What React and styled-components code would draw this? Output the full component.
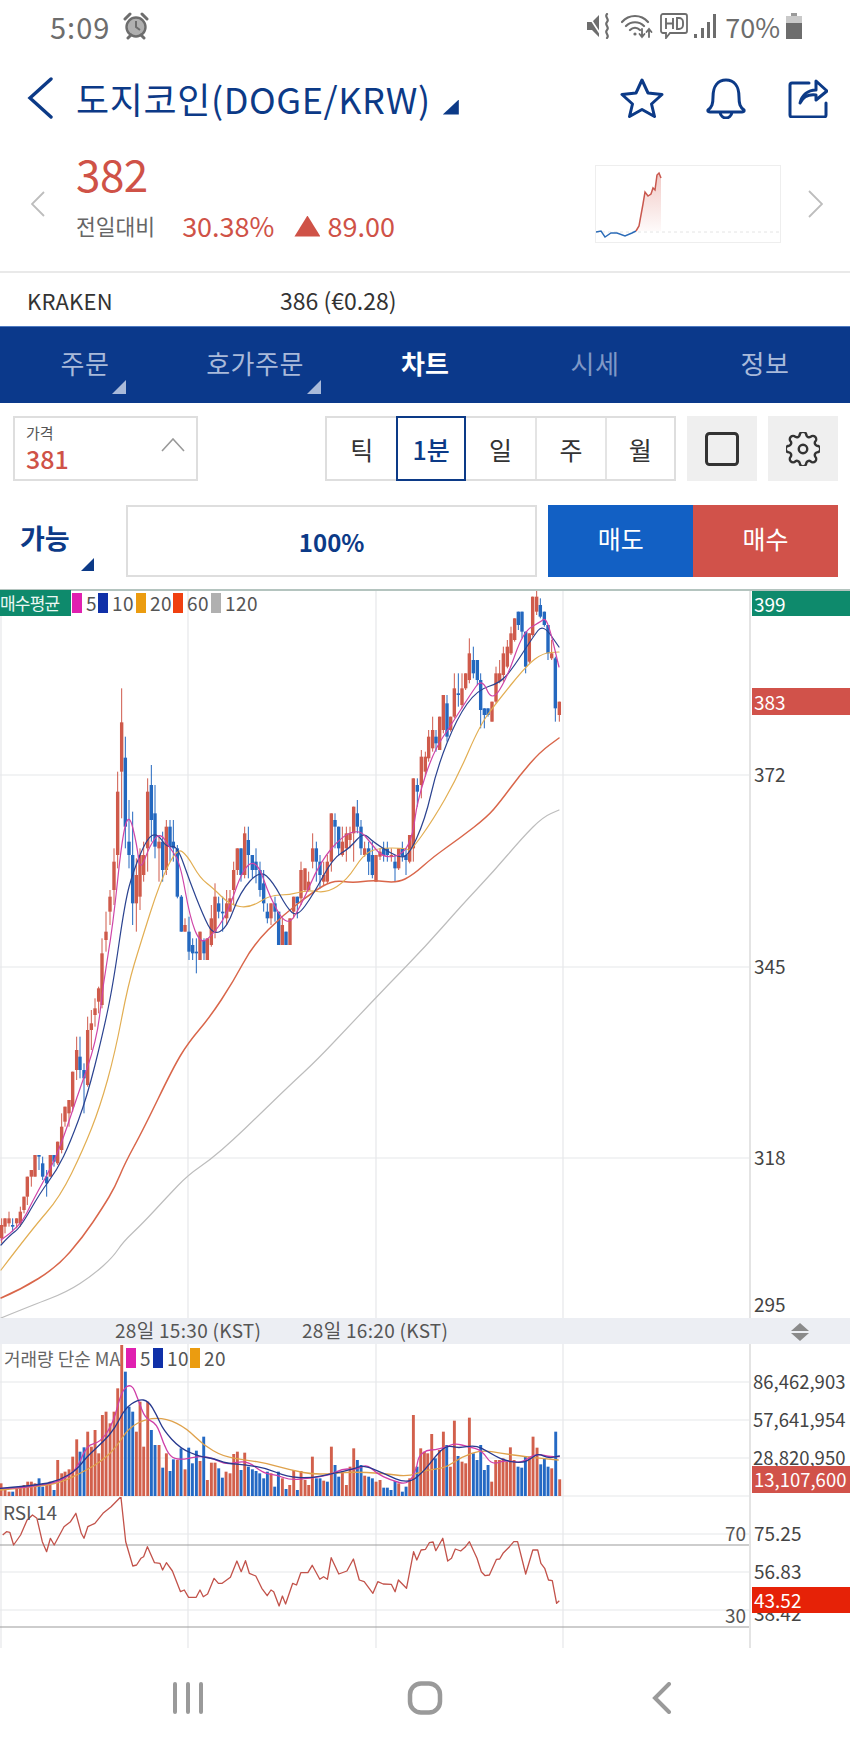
import React from 'react';
import styled, { createGlobalStyle } from 'styled-components';

const FONT = '"Noto Sans CJK KR", "Open Sans", sans-serif';
const NAVY = '#0c3a87';
const RED = '#cf5247';
const GRID = '#e6e7ea';

const Global = createGlobalStyle`
  html, body { margin: 0; padding: 0; background: #fff; }
  body { font-family: ${FONT}; }
  #root { width: 850px; }
`;

/* ---------- chart data, read off the reference ---------- */
const MA120 = [[1,1318],[33,1305],[67,1292],[93,1275],[113,1257],[123,1242],[143,1223],[167,1197],[188,1175],[210,1160],[233,1140],[257,1117],[290,1085],[317,1060],[350,1025],[388,985],[425,947],[462,905],[493,872],[523,837],[543,817],[559,810]];
const MA60 = [[1,1298],[20,1290],[57,1267],[83,1237],[103,1207],[115,1187],[125,1163],[143,1130],[173,1068],[188,1043],[210,1017],[233,982],[253,945],[283,915],[313,892],[333,880],[353,883],[373,880],[397,883],[413,875],[433,857],[460,838],[487,817],[500,802],[520,775],[540,752],[559,738]];
const MA20 = [[1,1270],[33,1228],[60,1197],[83,1150],[100,1107],[115,1053],[128,985],[140,945],[160,882],[177,848],[187,855],[200,878],[213,888],[230,905],[250,908],[270,895],[290,895],[307,890],[327,893],[347,880],[363,855],[377,848],[407,848],[410,852],[433,820],[457,778],[480,725],[497,702],[527,665],[543,653],[559,652]];
const MA10 = [[1,1245],[10,1235],[20,1228],[40,1193],[57,1170],[70,1143],[87,1097],[103,1033],[113,985],[125,902],[133,872],[147,838],[157,833],[167,848],[177,845],[190,882],[203,915],[213,935],[227,928],[240,892],[260,870],[273,882],[287,908],[297,917],[313,895],[333,858],[350,848],[363,832],[373,842],[397,857],[408,857],[425,820],[437,768],[457,718],[477,690],[500,683],[513,668],[533,637],[543,624],[559,647]];
const MA5 = [[1,1240],[20,1227],[33,1200],[57,1157],[77,1097],[97,1040],[103,985],[113,925],[122,838],[129,812],[137,845],[140,872],[150,845],[160,832],[170,848],[180,862],[190,918],[200,943],[210,938],[227,915],[243,868],[257,860],[270,898],[287,927],[300,908],[320,862],[343,835],[360,830],[370,842],[383,858],[403,855],[413,835],[417,802],[433,752],[453,722],[470,695],[482,678],[492,702],[507,678],[523,632],[540,622],[547,617],[559,667]];

const CANDLES_LEFT = [[5,735,775,715,790,'r'],[15,715,740,715,760,'r'],[27,715,730,695,740,'r'],[38,735,740,715,755,'b'],[50,715,730,715,745,'r'],[61,695,730,680,740,'r'],[72,650,690,650,700,'r'],[82,590,650,590,675,'r'],[94,570,590,570,620,'r'],[105,525,590,525,590,'r'],[117,525,530,525,570,'b'],[128,550,590,530,600,'b'],[140,590,610,570,650,'b'],[151,525,590,525,590,'r'],[162,525,545,525,560,'b'],[173,485,550,485,555,'r'],[185,440,510,400,520,'r'],[195,380,425,380,440,'r'],[207,360,400,360,440,'r'],[218,275,380,275,395,'r'],[230,210,270,170,300,'r'],[240,230,270,170,295,'b'],[252,270,295,250,400,'b'],[263,150,315,110,320,'r'],[274,130,150,90,210,'r'],[285,85,105,55,140,'r'],[296,25,65,20,100,'r']];
const CANDLES_MID = [[306,1105,1260,1060,1270,'r'],[318,1040,1065,980,1100,'r'],[330,935,980,915,1020,'r'],[342,830,915,790,960,'r'],[353,620,810,560,850,'r'],[365,412,560,310,700,'r'],[376,518,725,455,790,'b'],[387,770,810,645,850,'b'],[398,810,955,680,1020,'b'],[409,870,955,820,1040,'r'],[420,810,935,790,975,'r'],[431,810,870,770,890,'r'],[443,620,790,580,860,'r'],[454,600,705,540,770,'b'],[465,685,785,600,820,'b'],[477,770,790,750,890,'r'],[488,770,855,740,890,'b'],[499,725,855,705,870,'r'],[510,725,785,705,830,'b'],[520,770,790,705,830,'b'],[532,790,935,780,940,'b'],[544,935,1040,930,1040,'b'],[555,1020,1040,1000,1040,'r'],[567,1040,1100,995,1125,'b'],[578,1080,1105,1060,1125,'b'],[589,1100,1105,1060,1165,'b'],[600,1040,1125,1040,1125,'r'],[612,1065,1105,1060,1125,'b'],[622,1060,1125,1060,1125,'r'],[634,1000,1080,960,1085,'r'],[645,935,1040,895,1060,'r'],[656,955,980,935,1000,'b'],[668,980,985,935,1040,'b'],[680,955,1000,915,1020,'r'],[690,940,980,915,980,'r'],[701,855,915,830,960,'r'],[712,790,855,790,870,'r'],[723,790,870,790,890,'b'],[734,745,870,725,880,'r'],[745,765,810,725,880,'b'],[757,810,855,810,880,'b'],[768,830,855,790,895,'b'],[780,855,915,830,935,'b'],[791,895,955,855,980,'b'],[802,980,1000,955,1015,'b'],[813,955,1000,955,1020,'r'],[825,955,980,935,1010,'b'],[836,980,1080,980,1080,'b'],[847,1020,1080,1000,1080,'r'],[858,1040,1080,1040,1080,'b'],[870,1000,1080,1000,1080,'r'],[881,935,980,935,1000,'r'],[892,935,955,935,1000,'b'],[903,855,940,830,960,'r'],[915,850,915,850,920,'r'],[926,890,915,860,920,'r'],[938,790,830,745,850,'r'],[949,790,830,770,890,'b'],[960,830,870,810,910,'b'],[971,870,890,830,900,'r'],[982,830,890,810,895,'r'],[994,685,830,685,860,'r'],[1005,705,725,685,790,'b'],[1016,725,790,725,810,'b'],[1027,770,810,725,815,'r'],[1039,745,790,725,830,'r'],[1050,745,765,725,790,'r'],[1061,665,745,665,830,'r'],[1072,685,725,645,745,'b'],[1083,725,790,705,810,'b'],[1094,790,810,770,815,'r'],[1106,790,830,770,870,'b'],[1117,810,870,770,880,'b'],[1128,810,890,810,890,'r'],[1140,800,815,790,825,'r'],[1151,790,810,770,830,'b'],[1162,790,810,770,830,'b'],[1174,810,815,790,830,'r'],[1185,830,850,810,890,'b'],[1196,790,850,790,855,'r'],[1207,790,815,770,830,'b'],[1218,810,825,790,870,'b'],[1229,750,830,750,835,'r']];
const CANDLES_RIGHT = [[40,580,790,580,830,'r'],[52,600,620,580,665,'b'],[64,515,600,495,640,'r'],[76,515,560,500,575,'r'],[86,455,520,435,530,'r'],[98,435,490,395,500,'r'],[108,455,475,435,500,'b'],[119,395,495,395,495,'r'],[130,330,435,330,445,'r'],[141,355,455,330,470,'b'],[152,395,435,395,440,'r'],[163,310,395,265,400,'r'],[175,325,330,265,365,'b'],[186,310,360,265,370,'r'],[197,265,310,265,315,'r'],[208,205,285,160,295,'r'],[220,225,265,185,280,'b'],[232,225,285,225,300,'b'],[242,285,375,265,430,'b'],[253,370,390,370,430,'b'],[264,370,390,370,395,'b'],[276,350,410,350,410,'r'],[288,265,350,245,355,'r'],[299,265,290,225,295,'r'],[310,205,270,185,290,'r'],[322,185,245,165,250,'r'],[333,145,205,125,210,'r'],[344,100,165,100,170,'r'],[355,80,120,80,135,'b'],[366,80,140,80,160,'b'],[377,140,245,140,265,'b'],[388,145,230,145,235,'r'],[398,35,150,35,155,'r'],[410,35,80,15,90,'r'],[421,60,95,40,100,'b'],[433,80,120,80,125,'b'],[444,120,205,120,225,'b'],[455,205,220,165,225,'r'],[466,220,370,215,410,'b'],[478,350,390,350,410,'r']];

const CANDLES = [
  ...CANDLES_LEFT.map(([x, t, b, h, l, c]) => ({ x: x / 3, t: 980 + t / 3, b: 980 + b / 3, h: 980 + h / 3, l: 980 + l / 3, c })),
  ...CANDLES_MID.map(([x, t, b, h, l, c]) => ({ x: x / 3, t: 585 + t / 3, b: 585 + b / 3, h: 585 + h / 3, l: 585 + l / 3, c })),
  ...CANDLES_RIGHT.map(([x, t, b, h, l, c]) => ({ x: 400 + x / 3, t: 585 + t / 3, b: 585 + b / 3, h: 585 + h / 3, l: 585 + l / 3, c })),
];

const VOL_A = [[3,520,'r'],[15,540,'r'],[27,545,'r'],[38,545,'b'],[50,535,'r'],[61,530,'r'],[72,525,'r'],[83,515,'r'],[94,515,'r'],[105,520,'r'],[117,505,'b'],[128,530,'b'],[140,520,'r'],[150,515,'r'],[162,540,'b'],[173,450,'r'],[185,490,'r'],[195,485,'r'],[207,478,'r'],[218,440,'r'],[230,388,'r'],[240,425,'b'],[252,412,'b'],[263,365,'r'],[274,410,'r'],[285,360,'r'],[296,430,'r'],[307,315,'r'],[318,305,'r'],[330,340,'r'],[342,305,'r'],[353,235,'r'],[365,105,'r'],[376,185,'b'],[387,290,'b'],[398,305,'b'],[409,365,'r'],[420,275,'r'],[431,410,'r'],[443,275,'r'],[454,360,'b'],[465,405,'b'],[477,405,'r'],[488,473,'b'],[499,430,'r'],[510,483,'b'],[520,448,'b'],[532,450,'r'],[543,415,'b'],[555,478,'r'],[566,413,'b'],[577,460,'b'],[589,422,'b'],[600,453,'r'],[611,380,'b'],[622,510,'r'],[634,458,'r'],[645,458,'r'],[656,475,'b'],[667,503,'b'],[678,485,'r'],[690,490,'r'],[701,432,'r'],[712,425,'r'],[723,480,'b'],[734,428,'r'],[745,470,'b'],[757,478,'b'],[768,483,'b'],[779,490,'b'],[791,505,'b'],[802,485,'b'],[813,490,'r'],[824,530,'b'],[835,485,'b'],[847,505,'r'],[858,537,'b'],[869,525,'r'],[881,480,'r'],[892,540,'b'],[903,483,'r'],[915,510,'r'],[926,525,'r'],[937,440,'r'],[949,505,'b'],[960,505,'b'],[971,512,'r'],[982,515,'b'],[994,410,'r'],[1005,465,'b'],[1016,500,'b'],[1027,485,'r'],[1039,525,'r'],[1050,470,'r'],[1061,415,'r'],[1072,450,'b'],[1083,465,'b'],[1094,497,'r'],[1106,500,'b'],[1117,505,'b'],[1128,515,'r'],[1140,510,'r'],[1151,533,'b'],[1162,533,'b'],[1173,540,'b'],[1185,513,'b'],[1196,520,'r'],[1207,545,'b'],[1218,530,'b'],[1229,505,'r'],[1240,315,'r'],[1251,470,'b'],[1262,415,'r'],[1273,425,'r']];
const VOL_B = [[8,430,'r'],[20,372,'r'],[31,445,'b'],[43,420,'r'],[55,365,'r'],[65,405,'b'],[76,470,'r'],[88,332,'r'],[99,438,'b'],[111,455,'r'],[122,460,'r'],[133,323,'r'],[145,430,'b'],[156,450,'b'],[167,405,'b'],[178,480,'b'],[189,465,'b'],[200,515,'r'],[212,450,'r'],[223,450,'r'],[234,445,'r'],[245,455,'r'],[256,412,'r'],[267,450,'r'],[279,470,'b'],[290,473,'b'],[301,440,'b'],[313,440,'r'],[324,380,'r'],[336,413,'r'],[347,463,'b'],[358,445,'b'],[369,470,'b'],[380,475,'r'],[392,365,'b'],[404,508,'r']];
const VOLUMES = [
  ...VOL_A.map(([x, t, c]) => ({ x: x / 3, t: 1310 + t / 3, c })),
  ...VOL_B.map(([x, t, c]) => ({ x: 425 + x / 3, t: 1310 + t / 3, c })),
];
const volLine = (a, b) => [
  ...a.map(([x, y]) => [x / 3, 1310 + y / 3]),
  ...b.map(([x, y]) => [425 + x / 3, 1310 + y / 3]),
];
const VMA5 = volLine([[1,535],[60,535],[120,525],[180,515],[230,480],[260,405],[300,398],[340,340],[365,240],[395,220],[415,270],[435,325],[470,340],[490,400],[510,440],[540,450],[590,440],[610,440],[640,445],[680,465],[740,450],[790,490],[830,495],[870,510],[930,505],[990,495],[1030,475],[1070,480],[1100,462],[1130,490],[1170,510],[1225,525],[1250,475]], [[-20,440],[5,420],[30,420],[65,410],[90,400],[130,410],[170,420],[200,465],[240,450],[290,460],[330,430],[370,440],[403,440]]);
const VMA10 = volLine([[1,535],[120,525],[180,510],[230,480],[260,440],[310,395],[345,355],[375,295],[415,268],[445,272],[470,315],[490,360],[540,415],[600,440],[640,445],[680,460],[740,465],[800,475],[860,500],[930,505],[1000,490],[1060,478],[1090,465],[1150,490],[1225,523],[1275,480]], [[30,440],[65,405],[100,415],[150,405],[190,425],[230,450],[290,460],[320,445],[340,430],[370,445],[403,438]]);
const VMA20 = volLine([[1,540],[100,530],[180,520],[260,480],[310,450],[350,410],[385,355],[440,325],[500,325],[560,355],[610,405],[670,440],[740,450],[800,460],[870,480],[950,495],[1050,485],[1150,490],[1225,500],[1275,480]], [[60,475],[110,440],[170,420],[230,430],[300,440],[400,450]]);

const RSI = [[5,135],[12,125],[18,127],[25,165],[38,135],[50,90],[60,75],[68,85],[78,155],[86,185],[93,145],[100,165],[118,110],[130,95],[140,70],[150,130],[155,145],[162,110],[175,100],[190,70],[205,50],[223,20],[232,155],[245,228],[252,225],[260,205],[265,200],[272,170],[285,218],[295,220],[300,240],[307,218],[318,243],[333,305],[340,300],[348,322],[362,322],[369,300],[375,320],[383,312],[395,265],[403,280],[410,280],[425,262],[437,213],[445,245],[453,212],[460,250],[472,258],[483,295],[493,317],[500,300],[505,305],[515,348],[521,318],[527,342],[540,280],[547,285],[555,248],[568,248],[576,226],[590,268],[597,260],[604,268],[611,203],[625,252],[640,243],[652,207],[663,270],[672,275],[688,310],[697,275],[707,282],[722,283],[729,305],[735,270],[750,295],[763,185],[769,210],[777,180],[785,178],[792,158],[799,156],[804,182],[817,145],[826,213],[833,205],[840,177],[850,183],[858,172],[866,155],[880,205],[888,245],[895,257],[903,255],[916,208],[922,207],[928,190],[940,170],[948,155],[955,155],[970,252],[983,180],[992,180],[998,220],[1005,235],[1012,270],[1019,272],[1027,340],[1032,332]]
  .map(([x, y]) => [x / 1.845, 1490 + y / 3]);

const smooth = (pts) => {
  let d = `M${pts[0][0].toFixed(1)} ${pts[0][1].toFixed(1)}`;
  for (let i = 1; i < pts.length - 1; i++) {
    const mx = (pts[i][0] + pts[i + 1][0]) / 2;
    const my = (pts[i][1] + pts[i + 1][1]) / 2;
    d += `Q${pts[i][0].toFixed(1)} ${pts[i][1].toFixed(1)} ${mx.toFixed(1)} ${my.toFixed(1)}`;
  }
  const last = pts[pts.length - 1];
  return `${d}L${last[0].toFixed(1)} ${last[1].toFixed(1)}`;
};
const poly = (pts) => pts.map(([x, y]) => `${x.toFixed(1)},${y.toFixed(1)}`).join(' ');

/* ---------- styled parts ---------- */
const Page = styled.div`
  width: 850px;
  height: 1748px;
  display: flex;
  flex-direction: column;
  overflow: hidden;
  background: #fff;
  font-family: ${FONT};
`;

const StatusBar = styled.div`
  height: 52px;
  padding: 0 47px 0 50px;
  display: flex;
  align-items: center;
  color: #6d6d6d;
  flex: none;
`;
const Clock = styled.span`
  font-size: 29px;
  letter-spacing: 1px;
  line-height: 1;
  margin-right: 12px;
`;
const StatusIcons = styled.div`
  margin-left: auto;
  display: flex;
  align-items: center;
`;
const StatusSlot = styled.span`
  display: flex;
  align-items: center;
  margin-left: ${(p) => p.$gap}px;
`;
const BatteryText = styled.span`
  font-size: 27px;
  line-height: 1;
`;

const Header = styled.div`
  height: 92px;
  padding: 0 22px 0 27px;
  display: flex;
  align-items: center;
  flex: none;
`;
const Title = styled.h1`
  margin: 0 0 0 22px;
  font-size: 36px;
  font-weight: 400;
  color: ${NAVY};
  white-space: nowrap;
  letter-spacing: 0.6px;
`;
const TitleCaret = styled.span`
  width: 16px;
  height: 15px;
  margin: 18px 0 0 12px;
  background: ${NAVY};
  clip-path: polygon(100% 0, 100% 100%, 0 100%);
`;
const HeaderActions = styled.div`
  margin-left: auto;
  display: flex;
  align-items: center;
  gap: 42px;
`;

const Quote = styled.div`
  height: 129px;
  box-sizing: border-box;
  padding: 0 27px 8px 31px;
  display: flex;
  align-items: center;
  border-bottom: 2px solid #e9e9e9;
  flex: none;
`;
const QuoteInfo = styled.div`
  margin-left: 31px;
  align-self: flex-start;
  padding-top: 3px;
  display: flex;
  flex-direction: column;
`;
const Price = styled.div`
  font-size: 44px;
  line-height: 52px;
  color: ${RED};
  letter-spacing: -0.5px;
`;
const ChangeRow = styled.div`
  margin-top: 9px;
  display: flex;
  align-items: center;
  color: ${RED};
  font-size: 27px;
  line-height: 36px;
`;
const ChangeLabel = styled.span`
  color: #666;
  font-size: 21.500px;
  margin-right: 27px;
`;
const ChangeTriangle = styled.span`
  width: 26px;
  height: 21px;
  margin: 0 7px 0 20px;
  background: ${RED};
  clip-path: polygon(50% 0, 100% 100%, 0 100%);
`;
const Spark = styled.div`
  margin-left: auto;
  margin-right: 27px;
  width: 186px;
  height: 78px;
  box-sizing: border-box;
  border: 1px solid #eeeeee;
`;

const Exchange = styled.div`
  height: 53px;
  padding-left: 27px;
  display: flex;
  align-items: center;
  font-size: 22px;
  color: #333;
  flex: none;
`;
const ExchangeName = styled.span`
  width: 253px;
  letter-spacing: 0.2px;
`;
const ExchangeValue = styled.span`
  font-size: 23px;
`;

const Tabs = styled.div`
  height: 76px;
  background: #0b398b;
  border-top: 1px solid #4f7ac0;
  display: grid;
  grid-template-columns: repeat(5, 1fr);
  flex: none;
`;
const Tab = styled.div`
  position: relative;
  display: flex;
  align-items: center;
  justify-content: center;
  padding-bottom: 5px;
  font-size: 26px;
  letter-spacing: ${(p) => (p.$active ? '0' : '0.5px')};
  font-weight: ${(p) => (p.$active ? 700 : 400)};
  color: ${(p) => (p.$active ? '#fff' : p.$dim ? '#7f97c6' : '#a9bada')};
`;
const TabCorner = styled.span`
  position: absolute;
  right: ${(p) => p.$right}px;
  bottom: 9px;
  width: 14px;
  height: 14px;
  background: #a9bada;
  clip-path: polygon(100% 0, 100% 100%, 0 100%);
`;

const Toolbar = styled.div`
  margin-top: 13px;
  padding: 0 12px 0 13px;
  height: 65px;
  display: flex;
  flex: none;
`;
const PriceSelect = styled.div`
  position: relative;
  width: 185px;
  box-sizing: border-box;
  border: 2px solid #dedede;
  padding: 5px 0 0 11px;
  display: flex;
  flex-direction: column;
`;
const PriceLabel = styled.span`
  font-size: 15px;
  line-height: 20px;
  color: #555;
`;
const PriceValue = styled.span`
  font-size: 25px;
  line-height: 30px;
  color: ${RED};
  font-weight: 500;
`;
const PriceChevron = styled.span`
  position: absolute;
  right: 11px;
  top: 20px;
`;
const Segment = styled.div`
  margin-left: 127px;
  width: 351px;
  box-sizing: border-box;
  border: 2px solid #dedede;
  display: grid;
  grid-template-columns: repeat(5, 1fr);
`;
const SegmentItem = styled.div`
  display: flex;
  align-items: center;
  justify-content: center;
  font-size: 25px;
  color: ${(p) => (p.$active ? NAVY : '#333')};
  font-weight: ${(p) => (p.$active ? 500 : 400)};
  box-sizing: border-box;
  margin: ${(p) => (p.$active ? '-2px 0' : 0)};
  border: ${(p) => (p.$active ? `2px solid ${NAVY}` : 'none')};
  border-left: ${(p) => (p.$active ? `2px solid ${NAVY}` : p.$first ? 'none' : '2px solid #e4e4e4')};
`;
const ToolButton = styled.div`
  margin-left: 11px;
  width: 70px;
  background: #efefef;
  display: flex;
  align-items: center;
  justify-content: center;
`;

const TradeRow = styled.div`
  margin-top: 24px;
  height: 72px;
  padding: 0 12px 0 20px;
  display: flex;
  flex: none;
`;
const Available = styled.div`
  position: relative;
  width: 106px;
  padding-top: 15px;
  box-sizing: border-box;
  font-size: 27px;
  line-height: 36px;
  font-weight: 700;
  color: ${NAVY};
`;
const AvailableCorner = styled.span`
  position: absolute;
  left: 61px;
  bottom: 6px;
  width: 13px;
  height: 13px;
  background: ${NAVY};
  clip-path: polygon(100% 0, 100% 100%, 0 100%);
`;
const PercentBox = styled.div`
  width: 412px;
  box-sizing: border-box;
  border: 2px solid #dedede;
  display: flex;
  align-items: center;
  justify-content: center;
  font-size: 24px;
  font-weight: 700;
  color: ${NAVY};
`;
const TradeButton = styled.div`
  width: 145px;
  background: ${(p) => p.$bg};
  margin-left: ${(p) => p.$gap}px;
  color: #fff;
  display: flex;
  align-items: center;
  justify-content: center;
  font-size: 25px;
  padding-bottom: 6px;
  box-sizing: border-box;
`;

const ChartPanel = styled.div`
  position: relative;
  display: flex;
  height: ${(p) => p.$h}px;
  flex: none;
  margin-top: ${(p) => p.$mt || 0}px;
  border-top: ${(p) => (p.$topLine ? '2px solid #b4c4bf' : 'none')};
  box-sizing: content-box;
`;
const Plot = styled.div`
  position: relative;
  width: 749px;
  height: 100%;
  flex: none;
`;
const PlotSvg = styled.svg`
  display: block;
  width: 749px;
  height: 100%;
`;
const Axis = styled.div`
  position: relative;
  flex: 1;
  border-left: 2px solid #e4e4e4;
  overflow: hidden;
`;
const AxisLabel = styled.span`
  position: absolute;
  left: 3px;
  top: ${(p) => p.$y}px;
  transform: translateY(-50%);
  font-size: 19px;
  line-height: 24px;
  color: #444;
  white-space: nowrap;
`;
const VolumeLabel = styled(AxisLabel)`
  left: 2px;
  font-size: 18.500px;
`;
const AxisBadge = styled.div`
  position: absolute;
  left: 1px;
  right: 0;
  top: ${(p) => p.$y}px;
  height: ${(p) => p.$h}px;
  background: ${(p) => p.$bg};
  color: #fff;
  font-size: ${(p) => (p.$wide ? '18.500px' : '19px')};
  line-height: ${(p) => p.$h}px;
  padding-left: 2px;
  white-space: nowrap;
`;
const Legend = styled.div`
  position: absolute;
  left: 0;
  top: ${(p) => p.$top}px;
  display: flex;
  align-items: center;
  font-size: 19px;
  line-height: 22px;
  color: #555;
`;
const LegendTag = styled.span`
  background: #0e8a6c;
  color: #eaf7f3;
  width: 71px;
  height: 26px;
  line-height: 26px;
  font-size: 17px;
  letter-spacing: -0.8px;
  white-space: nowrap;
  margin-right: 1px;
`;
const LegendTitle = styled.span`
  width: 122px;
  margin-left: 4px;
  font-size: 18px;
  color: #666;
  white-space: nowrap;
`;
const Swatch = styled.span`
  width: 10px;
  height: 20px;
  background: ${(p) => p.$c};
`;
const SwatchText = styled.span`
  width: ${(p) => p.$w}px;
  padding-left: 4px;
  box-sizing: border-box;
  letter-spacing: 0.5px;
`;
const RsiTitle = styled.span`
  position: absolute;
  left: 3px;
  top: 3px;
  font-size: 19px;
  line-height: 24px;
  color: #555;
`;
const RsiLevel = styled.span`
  position: absolute;
  right: 3px;
  top: ${(p) => p.$y}px;
  transform: translateY(-50%);
  font-size: 19px;
  line-height: 24px;
  color: #555;
`;

const TimeBar = styled.div`
  position: relative;
  height: 26px;
  box-sizing: border-box;
  padding-bottom: 3px;
  background: #eceef3;
  display: flex;
  align-items: center;
  flex: none;
  font-size: 19px;
  letter-spacing: 0.3px;
  color: #555;
`;
const TimeLabel = styled.span`
  position: absolute;
  left: ${(p) => p.$x}px;
  white-space: nowrap;
`;
const TimeHandle = styled.span`
  position: absolute;
  left: 790px;
  top: 2px;
`;

const NavBar = styled.div`
  flex: 1;
  display: flex;
  align-items: center;
  justify-content: center;
`;
const NavItem = styled.div`
  width: 237px;
  display: flex;
  justify-content: center;
`;

const Chevron = styled.svg`
  flex: none;
  display: block;
`;

/* ---------- icons ---------- */
const Alarm = () => (
  <svg width="28" height="28" viewBox="0 0 28 28" fill="none" stroke="#6d6d6d" strokeWidth="2.4">
    <circle cx="14" cy="15" r="9.5" fill="#b0b0b0" />
    <path d="M14 9v6l4 3" strokeWidth="2" />
    <path d="M3 7l5-5M25 7l-5-5M6 26l3-3M22 26l-3-3" strokeWidth="3" strokeLinecap="round" />
  </svg>
);
const MuteIcon = () => (
  <svg width="26" height="26" viewBox="0 0 26 26" fill="none">
    <path d="M1 9h5l7-7v22l-7-7H1z" fill="#6d6d6d" />
    <path d="M2 2l13 20" stroke="#fff" strokeWidth="1.6" />
    <path d="M21 1c-3 3 3 5 0 8s3 5 0 8 3 5 0 8" stroke="#6d6d6d" strokeWidth="2.2" strokeLinecap="round" />
  </svg>
);
const WifiIcon = () => (
  <svg width="32" height="26" viewBox="0 0 32 26" fill="none" stroke="#6d6d6d" strokeWidth="2.2" strokeLinecap="round">
    <path d="M1 9c7-8 19-8 26 0M5 13c5-5 13-5 18 0M9 17c3-3 7-3 10 0" />
    <circle cx="14" cy="21" r="1.6" fill="#6d6d6d" stroke="none" />
    <path d="M21 16v8m-2.500-3l2.500 3 2.500-3M28 24v-8m-2.500 3l2.500-3 2.500 3" strokeWidth="1.800" />
  </svg>
);
const HdIcon = () => (
  <svg width="28" height="26" viewBox="0 0 28 26" fill="none">
    <path d="M3 1h22a2 2 0 0 1 2 2v15a2 2 0 0 1-2 2H10l-4 5v-5H3a2 2 0 0 1-2-2V3a2 2 0 0 1 2-2z" stroke="#6d6d6d" strokeWidth="1.800" />
    <path d="M6 5v11M13 5v11M6 10.500h7M17 5v11h2a4 4 0 0 0 4-4V9a4 4 0 0 0-4-4z" stroke="#6d6d6d" strokeWidth="1.900" />
  </svg>
);
const SignalIcon = () => (
  <svg width="24" height="26" viewBox="0 0 24 26" fill="#6d6d6d">
    <rect x="1" y="21" width="3" height="4" />
    <rect x="8" y="15" width="3" height="10" />
    <rect x="14" y="9" width="3" height="16" />
    <rect x="20" y="1" width="3" height="24" />
  </svg>
);
const BatteryIcon = () => (
  <svg width="18" height="26" viewBox="0 0 18 26">
    <path d="M6 0h6v3H6z" fill="#9a9a9a" />
    <path d="M1 3h16v7H1z" fill="#c9c9c9" />
    <path d="M1 10h16v16H1z" fill="#6d6d6d" />
  </svg>
);
const StarIcon = () => (
  <svg width="44" height="40" viewBox="0 0 44 40" fill="none" stroke={NAVY} strokeWidth="3" strokeLinejoin="round">
    <path d="M22 2l6 13 14 1.500-10.500 9.500 3 12.500L22 31.500 9.500 38.500l3-12.500L2 16.500 16 15z" />
  </svg>
);
const BellIcon = () => (
  <svg width="40" height="41" viewBox="0 0 40 41" fill="none" stroke={NAVY} strokeWidth="3" strokeLinejoin="round">
    <path d="M2 32C6 29 7 26 7 19 7 8 12 2 20 2s13 6 13 17c0 7 1 10 5 13 .5 1.500-1 2-2 2H4c-1 0-2.500-.5-2-2z" />
    <path d="M14 34c1 8 11 8 12 0" />
  </svg>
);
const ShareIcon = () => (
  <svg width="40" height="40" viewBox="0 0 40 40" fill="none" stroke={NAVY} strokeWidth="3" strokeLinejoin="round" strokeLinecap="round">
    <path d="M21 5H4Q2 5 2 7v30q0 2 2 2h32q2 0 2-2V25" />
    <path d="M12 25c2-8 8-13 16-13V3l11 10-11 9v-5c-8-1-13 2-16 8z" />
  </svg>
);

/* ---------- chart drawings ---------- */
const VGrid = ({ y1, y2 }) => (
  <g stroke={GRID} strokeWidth="1.200">
    {[1, 188, 376, 563].map((x) => <line key={x} x1={x} x2={x} y1={y1} y2={y2} />)}
  </g>
);
const HGrid = ({ ys, stroke = GRID }) => (
  <g stroke={stroke} strokeWidth="1.200">
    {ys.map((y) => <line key={y} x1="0" x2="749" y1={y} y2={y} />)}
  </g>
);
const CANDLE_RED = '#cf5a4b';
const CANDLE_BLUE = '#2468bf';

const MainPlot = () => (
  <PlotSvg viewBox="0 591 749 727" preserveAspectRatio="none">
    <VGrid y1={591} y2={1318} />
    <HGrid ys={[775, 967, 1158]} />
    {CANDLES.map((k, i) => {
      const c = k.c === 'r' ? CANDLE_RED : CANDLE_BLUE;
      return (
        <g key={i}>
          <line x1={k.x} x2={k.x} y1={k.h} y2={k.l} stroke={c} strokeWidth="1" />
          <rect x={k.x - 1.7} y={k.t} width="3.400" height={Math.max(k.b - k.t, 1.5)} fill={c} />
        </g>
      );
    })}
    <g fill="none" strokeLinecap="round" strokeWidth="1.200">
      <path d={smooth(MA120)} stroke="#bdbdbd" />
      <path d={smooth(MA60)} stroke="#d9664a" strokeWidth="1.500" />
      <path d={smooth(MA20)} stroke="#e2ae52" />
      <path d={smooth(MA10)} stroke="#2b4390" />
      <path d={smooth(MA5)} stroke="#cf45a8" />
    </g>
  </PlotSvg>
);

const VolumePlot = () => (
  <PlotSvg viewBox="0 1344 749 153" preserveAspectRatio="none">
    <VGrid y1={1344} y2={1497} />
    <HGrid ys={[1382, 1420, 1458, 1496]} />
    {VOLUMES.map((v, i) => (
      <rect key={i} x={v.x - 1.400} y={v.t} width="2.900" height={1496 - v.t} fill={v.c === 'r' ? '#d2604c' : '#2469c4'} />
    ))}
    <g fill="none" strokeWidth="1.300" strokeLinecap="round">
      <path d={smooth(VMA20)} stroke="#dfa24c" />
      <path d={smooth(VMA5)} stroke="#cf3fa8" />
      <path d={smooth(VMA10)} stroke="#27398f" />
    </g>
  </PlotSvg>
);

const RsiPlot = () => (
  <PlotSvg viewBox="0 1497 749 151" preserveAspectRatio="none">
    <VGrid y1={1497} y2={1648} />
    <HGrid ys={[1534, 1572, 1610]} />
    <HGrid ys={[1545, 1627]} stroke="#9c9c9c" />
    <polyline points={poly(RSI)} fill="none" stroke="#c2524a" strokeWidth="1.300" strokeLinejoin="round" />
  </PlotSvg>
);

const SparkChart = () => (
  <svg width="184" height="76" viewBox="0 0 184 76" fill="none">
    <defs>
      <linearGradient id="sparkFill" x1="0" y1="0" x2="0" y2="1">
        <stop offset="0" stopColor="#d9655a" stopOpacity="0.35" />
        <stop offset="1" stopColor="#d9655a" stopOpacity="0.03" />
      </linearGradient>
    </defs>
    <path d="M40 65L43 60 47 38 49 26 52 30 55 28 57 22 59 24 61 9 63 7 65 12V65z" fill="url(#sparkFill)" />
    <path d="M0 66H184" stroke="#e4e4e4" strokeDasharray="3 3" />
    <path d="M0 66L5 65 9 71 15 67 21 67 29 70 36 67 40 65" stroke="#2c6cb8" strokeWidth="1.400" />
    <path d="M40 65L43 60 47 38 49 26 52 30 55 28 57 22 59 24 61 9 63 7 65 12" stroke="#c9584e" strokeWidth="1.500" />
  </svg>
);

/* ---------- page ---------- */
export default function App() {
  return (
    <Page>
      <Global />
      <StatusBar>
        <Clock>5:09</Clock>
        <Alarm />
        <StatusIcons>
          <StatusSlot $gap={0}><MuteIcon /></StatusSlot>
          <StatusSlot $gap={9}><WifiIcon /></StatusSlot>
          <StatusSlot $gap={7}><HdIcon /></StatusSlot>
          <StatusSlot $gap={5}><SignalIcon /></StatusSlot>
          <StatusSlot $gap={8}><BatteryText>70%</BatteryText></StatusSlot>
          <StatusSlot $gap={5}><BatteryIcon /></StatusSlot>
        </StatusIcons>
      </StatusBar>

      <Header>
        <Chevron width="27" height="42" viewBox="0 0 27 42" fill="none" stroke={NAVY} strokeWidth="3.400" strokeLinecap="round">
          <path d="M24 2L3 21l21 19" />
        </Chevron>
        <Title>도지코인(DOGE/KRW)</Title>
        <TitleCaret />
        <HeaderActions>
          <StarIcon />
          <BellIcon />
          <ShareIcon />
        </HeaderActions>
      </Header>

      <Quote>
        <Chevron width="14" height="26" viewBox="0 0 14 26" fill="none" stroke="#bdbdbd" strokeWidth="1.800">
          <path d="M13 1L1 13l12 12" />
        </Chevron>
        <QuoteInfo>
          <Price>382</Price>
          <ChangeRow>
            <ChangeLabel>전일대비</ChangeLabel>
            30.38%
            <ChangeTriangle />
            89.00
          </ChangeRow>
        </QuoteInfo>
        <Spark><SparkChart /></Spark>
        <Chevron width="15" height="28" viewBox="0 0 15 28" fill="none" stroke="#bdbdbd" strokeWidth="1.800">
          <path d="M1 1l13 13L1 27" />
        </Chevron>
      </Quote>

      <Exchange>
        <ExchangeName>KRAKEN</ExchangeName>
        <ExchangeValue>386 (€0.28)</ExchangeValue>
      </Exchange>

      <Tabs>
        <Tab>주문<TabCorner $right={44} /></Tab>
        <Tab>호가주문<TabCorner $right={19} /></Tab>
        <Tab $active>차트</Tab>
        <Tab $dim>시세</Tab>
        <Tab>정보</Tab>
      </Tabs>

      <Toolbar>
        <PriceSelect>
          <PriceLabel>가격</PriceLabel>
          <PriceValue>381</PriceValue>
          <PriceChevron>
            <Chevron width="24" height="14" viewBox="0 0 24 14" fill="none" stroke="#999" strokeWidth="1.600">
              <path d="M1 13L12 1l11 12" />
            </Chevron>
          </PriceChevron>
        </PriceSelect>
        <Segment>
          <SegmentItem $first>틱</SegmentItem>
          <SegmentItem $active>1분</SegmentItem>
          <SegmentItem $first>일</SegmentItem>
          <SegmentItem>주</SegmentItem>
          <SegmentItem>월</SegmentItem>
        </Segment>
        <ToolButton>
          <svg width="34" height="34" viewBox="0 0 34 34" fill="none" stroke="#333" strokeWidth="3">
            <rect x="1.500" y="1.500" width="31" height="31" rx="3" />
          </svg>
        </ToolButton>
        <ToolButton>
          <svg width="34" height="34" viewBox="0 0 24 24" fill="none" stroke="#333" strokeWidth="1.700" strokeLinecap="round" strokeLinejoin="round">
            <path d="M9.670 4.140a2 2 0 0 1 4.660 0 2 2 0 0 0 3.010 1.250 2 2 0 0 1 3.300 3.300 2 2 0 0 0 1.250 3.010 2 2 0 0 1 0 4.660 2 2 0 0 0-1.250 3.010 2 2 0 0 1-3.300 3.300 2 2 0 0 0-3.010 1.250 2 2 0 0 1-4.660 0 2 2 0 0 0-3.010-1.250 2 2 0 0 1-3.300-3.300 2 2 0 0 0-1.250-3.010 2 2 0 0 1 0-4.660 2 2 0 0 0 1.250-3.010 2 2 0 0 1 3.300-3.300 2 2 0 0 0 3.010-1.250z" transform="translate(0 -2)" />
            <circle cx="12" cy="12" r="3" />
          </svg>
        </ToolButton>
      </Toolbar>

      <TradeRow>
        <Available>가능<AvailableCorner /></Available>
        <PercentBox>100%</PercentBox>
        <TradeButton $bg="#1260c4" $gap={11}>매도</TradeButton>
        <TradeButton $bg="#d1524a" $gap={0}>매수</TradeButton>
      </TradeRow>

      <ChartPanel $h={727} $mt={12} $topLine>
        <Plot>
          <MainPlot />
          <Legend $top={-1}>
            <LegendTag>매수평균</LegendTag>
            <Swatch $c="#e020b0" />
            <SwatchText $w={16}>5</SwatchText>
            <Swatch $c="#1030a8" />
            <SwatchText $w={28}>10</SwatchText>
            <Swatch $c="#eb9c10" />
            <SwatchText $w={27}>20</SwatchText>
            <Swatch $c="#f04010" />
            <SwatchText $w={28}>60</SwatchText>
            <Swatch $c="#b0b0b0" />
            <SwatchText $w={40}>120</SwatchText>
          </Legend>
        </Plot>
        <Axis>
          <AxisLabel $y={183}>372</AxisLabel>
          <AxisLabel $y={375}>345</AxisLabel>
          <AxisLabel $y={566}>318</AxisLabel>
          <AxisLabel $y={713}>295</AxisLabel>
          <AxisBadge $y={0} $h={25} $bg="#0e8a6c">399</AxisBadge>
          <AxisBadge $y={97} $h={27} $bg="#d1524a">383</AxisBadge>
        </Axis>
      </ChartPanel>

      <TimeBar>
        <TimeLabel $x={115}>28일 15:30 (KST)</TimeLabel>
        <TimeLabel $x={302}>28일 16:20 (KST)</TimeLabel>
        <TimeHandle>
          <svg width="20" height="20" viewBox="0 0 20 20" fill="#8a8a8a">
            <path d="M10 1l9 8H1zM1 11h18l-9 8z" />
          </svg>
        </TimeHandle>
      </TimeBar>

      <ChartPanel $h={153}>
        <Plot>
          <VolumePlot />
          <Legend $top={3}>
            <LegendTitle>거래량 단순 MA</LegendTitle>
            <Swatch $c="#e020b0" />
            <SwatchText $w={17}>5</SwatchText>
            <Swatch $c="#1030a8" />
            <SwatchText $w={27}>10</SwatchText>
            <Swatch $c="#eb9c10" />
            <SwatchText $w={30}>20</SwatchText>
          </Legend>
        </Plot>
        <Axis>
          <VolumeLabel $y={37}>86,462,903</VolumeLabel>
          <VolumeLabel $y={75}>57,641,954</VolumeLabel>
          <VolumeLabel $y={113}>28,820,950</VolumeLabel>
          <AxisBadge $y={122} $h={27} $bg="#d1524a" $wide>13,107,600</AxisBadge>
        </Axis>
      </ChartPanel>

      <ChartPanel $h={151}>
        <Plot>
          <RsiPlot />
          <RsiTitle>RSI 14</RsiTitle>
          <RsiLevel $y={36}>70</RsiLevel>
          <RsiLevel $y={118}>30</RsiLevel>
        </Plot>
        <Axis>
          <AxisLabel $y={36}>75.25</AxisLabel>
          <AxisLabel $y={74}>56.83</AxisLabel>
          <AxisLabel $y={116}>38.42</AxisLabel>
          <AxisBadge $y={90} $h={26} $bg="#e62207">43.52</AxisBadge>
        </Axis>
      </ChartPanel>

      <NavBar>
        <NavItem>
          <svg width="30" height="32" viewBox="0 0 30 32" stroke="#9a9a9a" strokeWidth="4" strokeLinecap="round">
            <path d="M2 2v28M15 2v28M28 2v28" />
          </svg>
        </NavItem>
        <NavItem>
          <svg width="36" height="34" viewBox="0 0 36 34" fill="none" stroke="#9a9a9a" strokeWidth="4.500">
            <rect x="3" y="2.500" width="30" height="29" rx="11" />
          </svg>
        </NavItem>
        <NavItem>
          <svg width="20" height="32" viewBox="0 0 20 32" fill="none" stroke="#9a9a9a" strokeWidth="4" strokeLinecap="round">
            <path d="M17 2L3 16l14 14" />
          </svg>
        </NavItem>
      </NavBar>
    </Page>
  );
}
